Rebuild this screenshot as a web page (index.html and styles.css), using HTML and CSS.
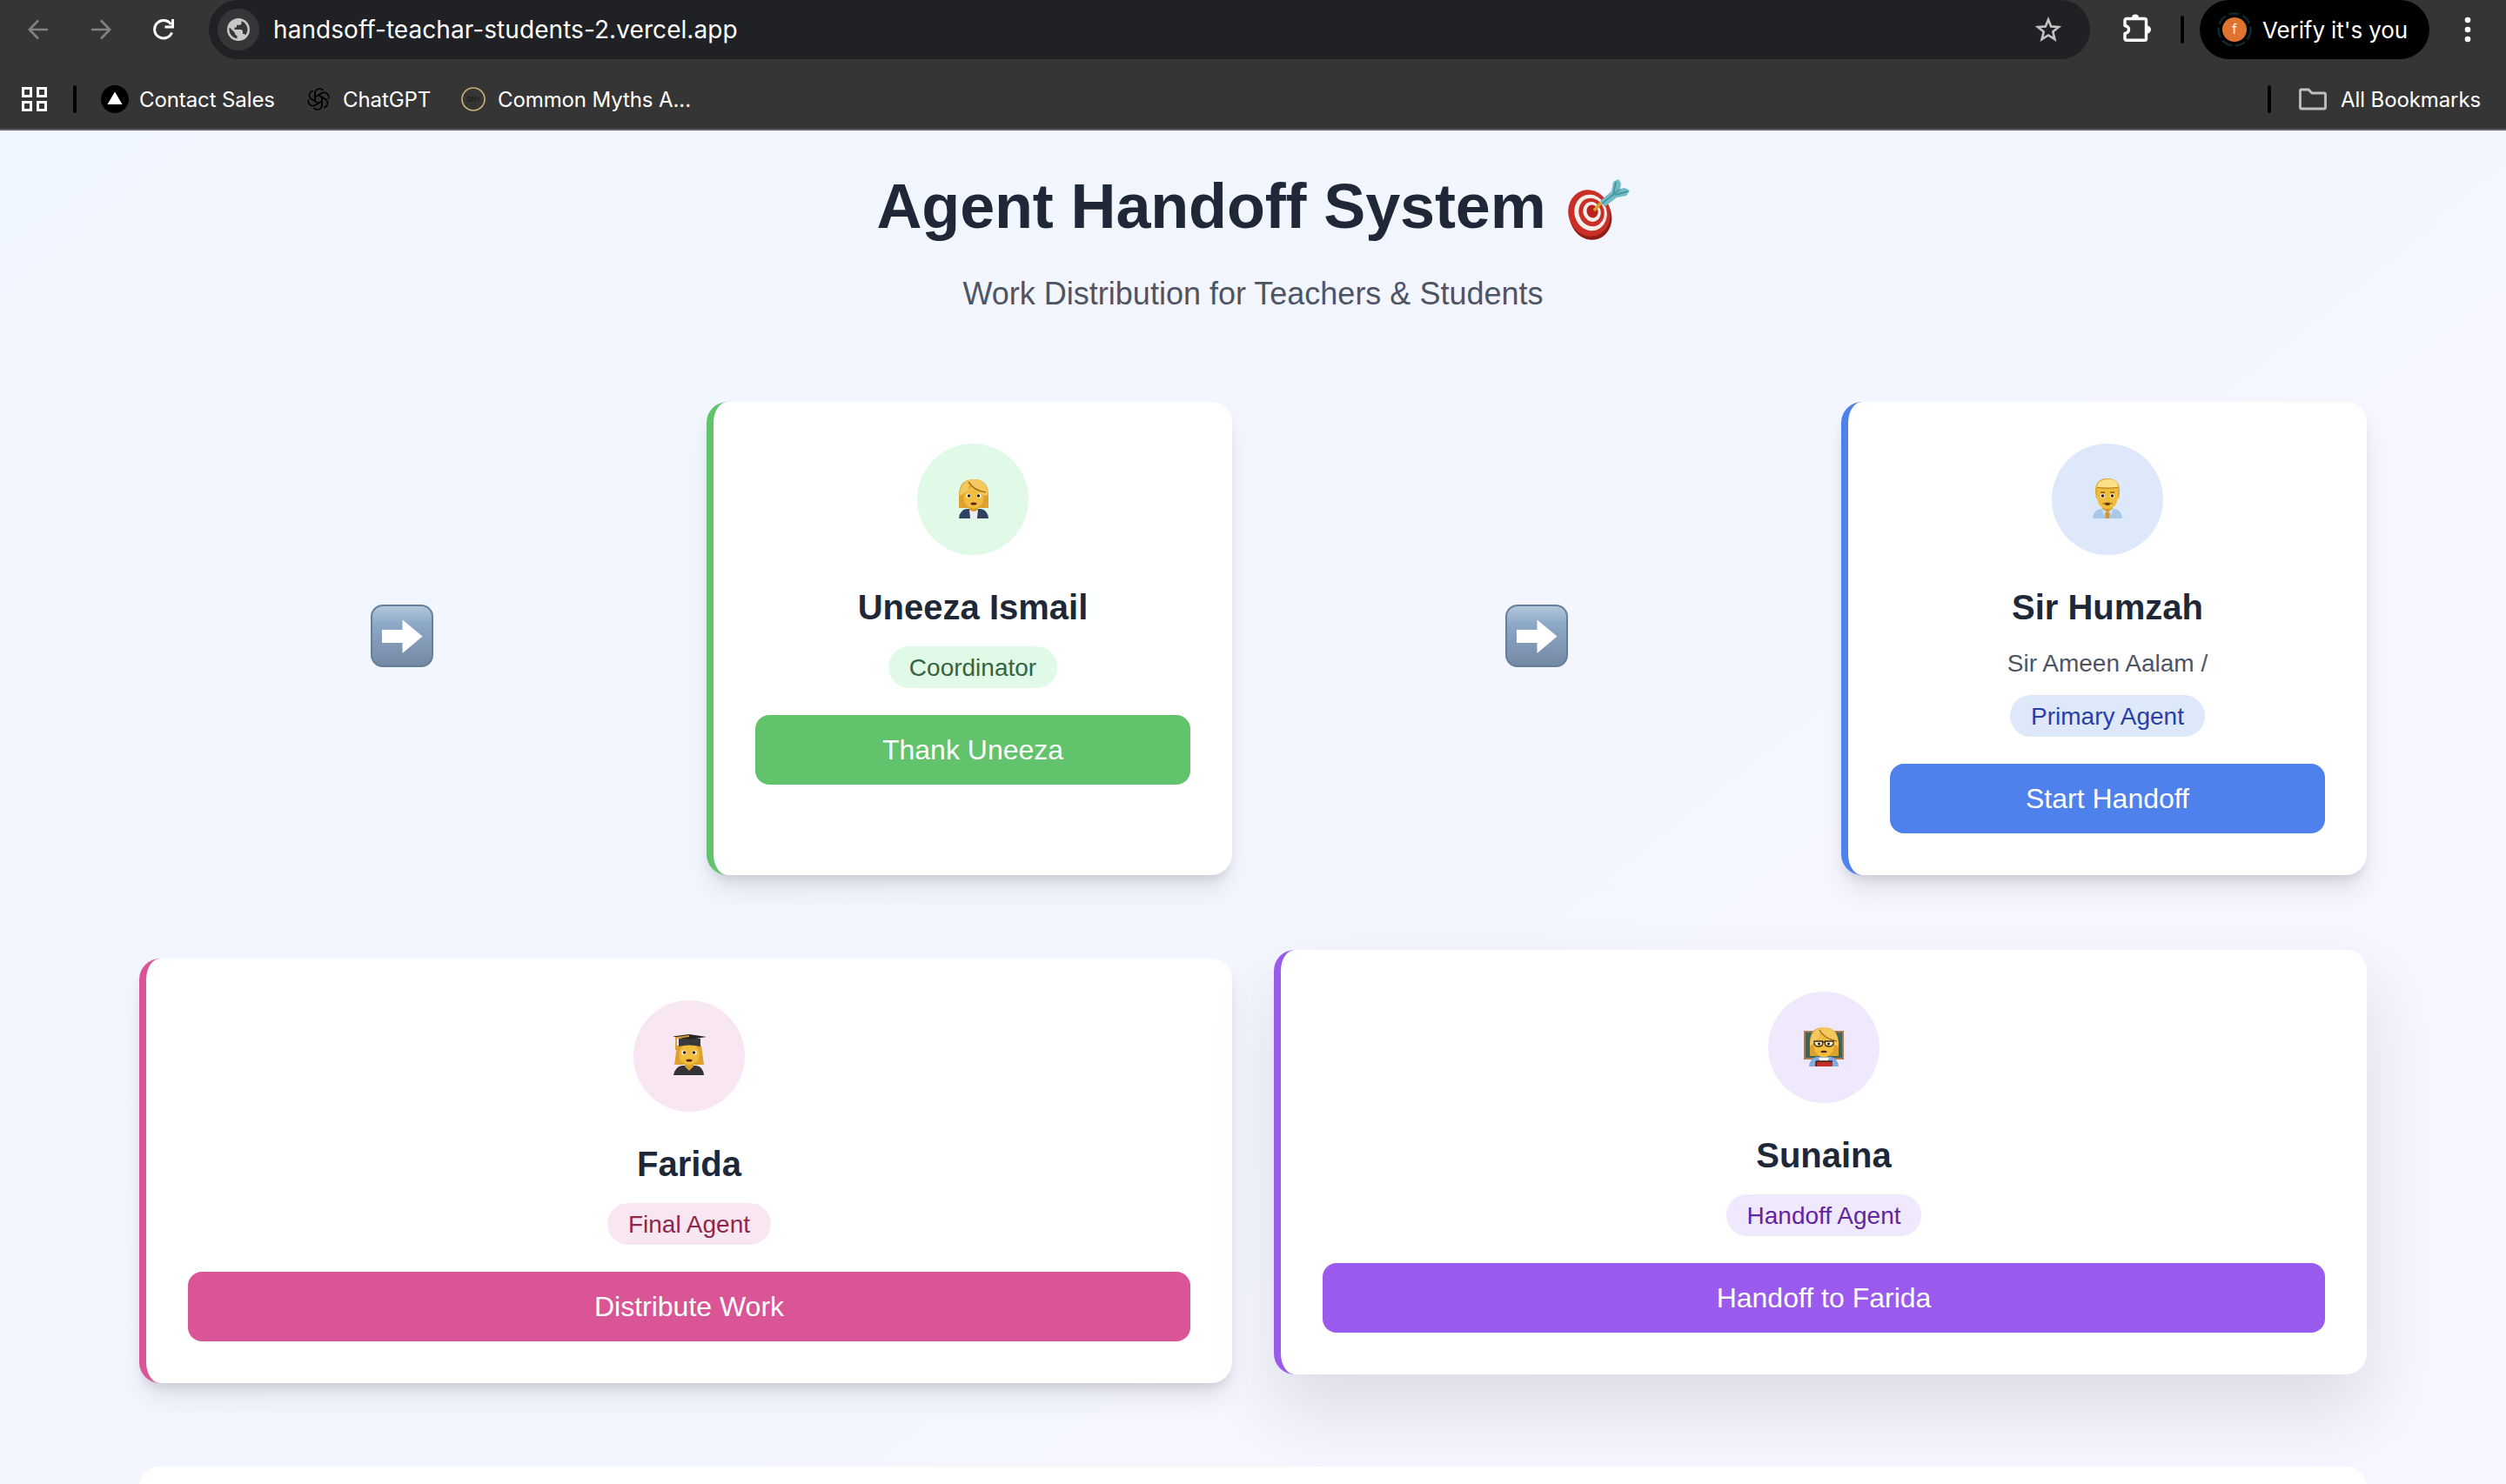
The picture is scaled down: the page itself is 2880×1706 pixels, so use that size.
FILE: index.html
```html
<!DOCTYPE html>
<html lang="en">
<head>
<meta charset="utf-8">
<title>Agent Handoff System</title>
<link rel="stylesheet" href="styles.css">
</head>
<body>
<header class="browser">
  <div class="toolbar">
    <svg class="nav back" viewBox="0 0 24 24"><path d="M23 12H2M12 1.500L1.700 12 12 22.500"/></svg>
    <svg class="nav forward" viewBox="0 0 24 24"><path d="M1 12H22M12 1.500L22.300 12 12 22.500"/></svg>
    <svg class="nav reload" viewBox="0 0 24 24"><path d="M21.500 15.500A10.300 10.300 0 1 1 20.500 6M22.500 0V9H13.500"/></svg>
    <div class="omnibox">
      <span class="site"><svg viewBox="0 0 26 26"><circle cx="13" cy="13" r="13" fill="#c7c7c7"/><path d="M2.700 10.500L9 16.800V18.300L11.500 20.500V23.300A10.400 10.400 0 0 1 2.700 10.500ZM16.500 3.200V5.200Q16.500 7.800 13.500 7.800H11V10.500H8.500V13H16Q18 13 18 15.500V18H19.500L21.300 19.300A10.400 10.400 0 0 0 16.500 3.200Z" fill="#353638"/></svg></span>
      <span class="url">handsoff-teachar-students-2.vercel.app</span>
      <svg class="star" viewBox="0 0 30 30"><path d="M15 3.500L18.200 11.400 27 12 20.300 17.600 22.400 26.200 15 21.500 7.600 26.200 9.700 17.600 3 12 11.800 11.400Z"/></svg>
    </div>
    <svg class="puzzle" viewBox="0 0 32 32"><path d="M4 5.500H24.500Q26.500 5.500 26.500 7.500V28.500Q26.500 30.300 24.500 30.300H4Q2 30.300 2 28.500V22.500Q6.500 21.500 6.500 18T2 13.500V7.500Q2 5.500 4 5.500Z"/><path class="knob" d="M10 4.500A4 4 0 0 1 18 4.500ZM27.500 13.500A4.500 4.500 0 0 1 27.500 22.500Z"/></svg>
    <i class="rule rule-a"></i>
    <div class="verify">
      <svg viewBox="0 0 42 42"><circle cx="21" cy="21" r="18.500" fill="none" stroke="#10282d" stroke-width="2.500" stroke-dasharray="12 4"/><circle cx="21" cy="21" r="14" fill="#df7430"/><text x="21" y="25.500" text-anchor="middle">f</text></svg>
      <span class="verify-text">Verify it's you</span>
    </div>
    <svg class="dots" viewBox="0 0 8 30"><circle cx="4" cy="4" r="3.300"/><circle cx="4" cy="15" r="3.300"/><circle cx="4" cy="26" r="3.300"/></svg>
  </div>
  <div class="bookmarks">
    <svg class="apps" viewBox="0 0 29 28"><path d="M1.500 1.500h9v9h-9zM18.500 1.500h9v9h-9zM1.500 17.500h9v9h-9zM18.500 17.500h9v9h-9z"/></svg>
    <i class="rule"></i>
    <div class="mark m1"><svg viewBox="0 0 32 32"><circle cx="16" cy="16" r="16"/><path d="M16 7.500L24.500 22H7.500Z" fill="#fff"/></svg><span>Contact Sales</span></div>
    <div class="mark m2"><svg viewBox="0 0 28 28"><g fill="none" stroke="#000" stroke-width="1.500"><path id="petal" d="M10 16.300V6.500A5.200 5.200 0 0 1 19.300 4M10 11.700L17.800 7.200A5.200 5.200 0 0 1 19.200 6.600"/><use href="#petal" transform="rotate(60 14 14)"/><use href="#petal" transform="rotate(120 14 14)"/><use href="#petal" transform="rotate(180 14 14)"/><use href="#petal" transform="rotate(240 14 14)"/><use href="#petal" transform="rotate(300 14 14)"/></g></svg><span>ChatGPT</span></div>
    <div class="mark m3"><svg viewBox="0 0 28 28"><circle cx="14" cy="14" r="13" fill="none" stroke="#c5ae78" stroke-width="1.700"/><text x="14" y="16.500" text-anchor="middle">SINY</text></svg><span>Common Myths A...</span></div>
    <div class="all"><i class="rule"></i><svg viewBox="0 0 32 26"><path d="M1.500 3.500Q1.500 2 3 2H11L15 6H29Q30.500 6 30.500 7.500V22.500Q30.500 24 29 24H3Q1.500 24 1.500 22.500Z"/></svg><span>All Bookmarks</span></div>
  </div>
</header>

<main class="page">
  <div class="heading">
    <h1><span>Agent Handoff System</span>
      <svg class="target" viewBox="0 0 72 72"><ellipse cx="27" cy="44" rx="24" ry="27" transform="rotate(-18 27 44)" fill="#8f1d16"/><ellipse cx="25.500" cy="40" rx="24" ry="27" transform="rotate(-18 25.500 40)" fill="#c92f26"/><ellipse cx="27" cy="39.500" rx="18.500" ry="21" transform="rotate(-18 27 39.500)" fill="#f5efec"/><ellipse cx="28" cy="39" rx="14.500" ry="16.500" transform="rotate(-18 28 39)" fill="#c92f26"/><ellipse cx="28.500" cy="38.500" rx="10" ry="11.500" transform="rotate(-18 28.500 38.500)" fill="#f5efec"/><ellipse cx="29" cy="38" rx="6.500" ry="7.500" transform="rotate(-18 29 38)" fill="#b8241c"/><path d="M31 37L39 28" stroke="#d5a42c" stroke-width="3.500"/><path d="M38 26L43 33 57 22 68 20 72 14 66 11 61 12 62 6 59 1 53 4 51 15Z" fill="#70bcc3"/><path d="M40 29L60 13M53 20L56 4M55 19L70 15" stroke="#418e9c" stroke-width="1.500"/></svg>
    </h1>
    <p>Work Distribution for Teachers &amp; Students</p>
  </div>

  <section class="grid">
    <div class="arrow"><svg viewBox="0 0 72 72"><defs><linearGradient id="key" x2="0" y2="1"><stop offset="0" stop-color="#b6c9dc"/><stop offset=".3" stop-color="#8da8c8"/><stop offset=".6" stop-color="#849bb8"/><stop offset="1" stop-color="#7388a3"/></linearGradient></defs><rect x="1" y="1" width="70" height="70" rx="13" fill="url(#key)" stroke="#667f9b" stroke-width="2"/><path d="M13 29H36.500V17.500L59.500 36.500 36.500 56V44H13Z" fill="#fff"/></svg></div>
    <article class="card green">
      <div class="avatar"><svg viewBox="0 0 48 48"><path d="M7 35V19Q8 2 24 2T41 19V35Z" fill="#dda22e"/><path d="M7 47Q8 37 16 36H32Q40 37 41 47Z" fill="#30405f"/><path d="M19 36H29L28 47H20Z" fill="#eceef4"/><path d="M19 32H29V37Q24 41 19 37Z" fill="#d99b26"/><ellipse cx="24" cy="23" rx="11.500" ry="12.500" fill="#f2bd3c"/><path d="M8 21Q8 3 24 2T40 21Q30 20 19 9 17 17 8 21Z" fill="#f3c85f"/><path d="M18 5Q24 15 38 17" fill="none" stroke="#a86d18" stroke-width="1.500"/><circle cx="18" cy="21" r="2.600" fill="#fff"/><circle cx="30" cy="21" r="2.600" fill="#fff"/><circle cx="18.500" cy="21" r="1.800" fill="#34200d"/><circle cx="29.500" cy="21" r="1.800" fill="#34200d"/><ellipse cx="24" cy="30" rx="3.500" ry="1.500" fill="#5c2611"/></svg></div>
      <h2>Uneeza Ismail</h2>
      <span class="badge">Coordinator</span>
      <button>Thank Uneeza</button>
    </article>
    <div class="arrow"><svg viewBox="0 0 72 72"><rect x="1" y="1" width="70" height="70" rx="13" fill="url(#key)" stroke="#667f9b" stroke-width="2"/><path d="M13 29H36.500V17.500L59.500 36.500 36.500 56V44H13Z" fill="#fff"/></svg></div>
    <article class="card blue">
      <div class="avatar"><svg viewBox="0 0 48 48"><path d="M7 47Q8 37 16 36H32Q40 37 41 47Z" fill="#a9c8e8"/><path d="M18 33H30V37L24 41 18 37Z" fill="#d69a2b"/><path d="M17 35L24 40 20 44ZM31 35L24 40 28 44Z" fill="#cde0f4"/><path d="M24 39L27 41 26 47H22L21 41Z" fill="#cf9a3c"/><path d="M10 18Q9 1 24 1T38 18L37 24H11Z" fill="#dfa934"/><path d="M12 12H36V22Q35 36 24 36T12 22Z" fill="#f0bd3d"/><path d="M12 11Q12 3 24 2T36 11Q24 12 12 11Z" fill="#ffe08a"/><path d="M12 11.500Q24 13 36 11.500" fill="none" stroke="#b07c1d" stroke-width="1.200"/><path d="M16 17h5M27 17h5" stroke="#855116" stroke-width="1.500"/><circle cx="18.500" cy="21" r="2.500" fill="#fff"/><circle cx="29.500" cy="21" r="2.500" fill="#fff"/><circle cx="18.500" cy="21" r="1.800" fill="#34200d"/><circle cx="29.500" cy="21" r="1.800" fill="#34200d"/><path d="M18 30Q24 28 30 30" fill="none" stroke="#9b6a20" stroke-width="1"/><ellipse cx="24" cy="30.500" rx="3" ry="1.200" fill="#4e210d"/></svg></div>
      <h2>Sir Humzah</h2>
      <p class="sub">Sir Ameen Aalam /</p>
      <span class="badge">Primary Agent</span>
      <button>Start Handoff</button>
    </article>
    <article class="card pink wide">
      <div class="avatar"><svg viewBox="0 0 48 48"><path d="M7 35L10 13H38L41 35Z" fill="#dda22e"/><path d="M6 47Q8 37 16 36H32Q40 37 41 47Z" fill="#333336"/><path d="M19 32H29V37L24 42 19 37Z" fill="#dda22e"/><ellipse cx="24" cy="23" rx="11.500" ry="12" fill="#f2bd3c"/><path d="M12 14V5L24 3 37 5V14Q24 11 12 14Z" fill="#39393c"/><path d="M5 2.500L24 0 44 3 24 6Z" fill="#242426"/><path d="M24 2L9 4V18" fill="none" stroke="#d69a31" stroke-width="1.800"/><circle cx="18" cy="21" r="2.600" fill="#fff"/><circle cx="30" cy="21" r="2.600" fill="#fff"/><circle cx="18.500" cy="21" r="1.800" fill="#34200d"/><circle cx="29.500" cy="21" r="1.800" fill="#34200d"/><ellipse cx="24" cy="30" rx="3.500" ry="1.500" fill="#5c2611"/></svg></div>
      <h2>Farida</h2>
      <span class="badge">Final Agent</span>
      <button>Distribute Work</button>
    </article>
    <article class="card purple wide raised">
      <div class="avatar"><svg viewBox="0 0 48 48"><path d="M2 7H46V38H2Z" fill="#3c665a" stroke="#b1794e" stroke-width="2"/><path d="M8 35V19Q8 2 24 2T41 19V35Z" fill="#dda22e"/><path d="M7 47Q8 37 16 36H32Q40 37 41 47Z" fill="#83ace0"/><ellipse cx="24" cy="23" rx="11.500" ry="13.500" fill="#f2bd3c"/><path d="M8 24Q8 3 24 2T41 24Q30 20 20 9 17 18 8 24Z" fill="#f3c85f"/><path d="M19 5Q24 15 39 18" fill="none" stroke="#a86d18" stroke-width="1.500"/><path d="M13 18H22.500V21.500Q22 24 18 24T13 21ZM25.500 18H35V21Q34 24 30 24T25.500 21.500ZM22.500 19H25.500" fill="#fff3cb" stroke="#3b2b1b" stroke-width="1.300"/><circle cx="18.500" cy="21" r="1.600" fill="#34200d"/><circle cx="29.500" cy="21" r="1.600" fill="#34200d"/><ellipse cx="24" cy="30" rx="3.500" ry="1.300" fill="#5c2611"/><path d="M18 37H30L28 41H20Z" fill="#fff"/><path d="M15 41H34V47H15Z" fill="#c52f2a"/><path d="M15 41V47M15 41H34" stroke="#382426" stroke-width="1.500"/></svg></div>
      <h2>Sunaina</h2>
      <span class="badge">Handoff Agent</span>
      <button>Handoff to Farida</button>
    </article>
  </section>
  <section class="panel"></section>
</main>
</body>
</html>
```
FILE: styles.css
```css
* { box-sizing: border-box; }
body { margin: 0; height: 1706px; overflow: hidden; font-family: "Liberation Sans", Arial, sans-serif; }
h1, h2, p { margin: 0; }
svg { display: block; flex: none; }

.browser { height: 150px; background: #353535; border-bottom: 2px solid #616161; color: #fff; font-family: Inter, sans-serif; }
.toolbar { display: flex; align-items: center; height: 68px; padding-left: 32px; }
.nav { width: 24px; height: 24px; fill: none; stroke: #828282; stroke-width: 2.6; }
.forward { margin-left: 48px; }
.reload { margin-left: 48px; stroke: #fff; stroke-width: 3; }
.omnibox { display: flex; align-items: center; width: 2162px; height: 68px; margin-left: 40px; padding: 0 33px 0 10px; border-radius: 34px; background: #202125; }
.site { display: flex; align-items: center; justify-content: center; width: 48px; height: 48px; border-radius: 50%; background: #353638; }
.site svg { width: 26px; height: 26px; }
.url { margin-left: 16px; font-size: 28px; letter-spacing: .07px; white-space: nowrap; }
.star { width: 30px; height: 30px; margin-left: auto; fill: none; stroke: #c3c3c4; stroke-width: 2.6; }
.puzzle { width: 32px; height: 32px; margin: -4px 0 0 38px; fill: none; stroke: #fff; stroke-width: 3.4; stroke-linejoin: round; }
.puzzle .knob { fill: #fff; stroke: none; }
.rule { flex: none; width: 4px; height: 32px; border-radius: 2px; background: #000; }
.rule-a { margin-left: 34px; }
.verify { display: flex; align-items: center; width: 264px; height: 68px; margin-left: 18px; padding-left: 19px; border-radius: 34px; background: #000; }
.verify svg { width: 42px; height: 42px; }
.verify text { font: 15px Inter, sans-serif; fill: #fff; }
.verify-text { margin-left: 11px; font-size: 26px; font-weight: 400; letter-spacing: -.1px; white-space: nowrap; }
.dots { width: 8px; height: 30px; margin-left: 40px; fill: #fff; }
.bookmarks { display: flex; align-items: center; height: 92px; padding: 0 30px 0 25px; font-size: 24px; letter-spacing: -.1px; white-space: nowrap; }
.apps { width: 29px; height: 28px; margin-right: 30px; fill: none; stroke: #fff; stroke-width: 3; }
.mark, .all { display: flex; align-items: center; }
.m1 { width: 209px; margin-left: 28px; gap: 12px; }
.m1 svg { width: 32px; height: 32px; }
.m2 { width: 178px; margin-left: 27px; gap: 14px; }
.m2 svg, .m3 svg { width: 28px; height: 28px; }
.m3 { gap: 14px; }
.m3 text { font: 7px Inter, sans-serif; fill: #171717; }
.all { margin-left: auto; }
.all span { width: 160px; }
.all svg { width: 32px; height: 26px; margin: 0 16px 0 32px; fill: none; stroke: #c0c0c0; stroke-width: 2.8; }

.page { height: 1556px; padding: 48px 160px 0; overflow: hidden; background: linear-gradient(to bottom right, #f0f6ff, #f8f5ff) 0 0 / 100% 2300px; }
.heading { text-align: center; }
h1 { display: flex; justify-content: center; gap: 24px; height: 80px; line-height: 78px; font-size: 72px; font-weight: 700; letter-spacing: -.15px; color: #202837; }
.target { width: 72px; height: 72px; margin-top: 10px; transform: translateY(-3px); }
.heading p { margin-top: 32px; line-height: 56px; font-size: 36px; color: #4d5564; }
.grid { display: grid; grid-template-columns: repeat(4, 604px); column-gap: 48px; row-gap: 96px; margin-top: 96px; }
.arrow { display: flex; align-items: center; justify-content: center; padding-bottom: 6px; }
.arrow svg { width: 72px; height: 72px; }
.card { display: flex; flex-direction: column; align-items: center; padding: 48px; border-left: 8px solid var(--main); border-radius: 24px; background: #fff; box-shadow: 0 20px 30px -6px rgba(0,0,0,.1), 0 8px 12px -4px rgba(0,0,0,.1); }
.wide { grid-column: span 2; }
.raised { position: relative; top: -10px; box-shadow: 0 40px 80px rgba(0,0,0,.1); }
.green { --main: #61c36c; --soft: #e1f9e7; --ink: #336640; }
.blue { --main: #4f81ec; --soft: #dee8fb; --ink: #2740a8; }
.pink { --main: #d95596; --soft: #f8e7f2; --ink: #8f264c; }
.purple { --main: #9b5aee; --soft: #f0e8fd; --ink: #6226a0; }
.avatar { display: flex; align-items: center; justify-content: center; width: 128px; height: 128px; margin-bottom: 32px; border-radius: 50%; background: var(--soft); }
.avatar svg { width: 48px; height: 48px; }
.green .avatar svg { margin-left: 2px; }
.avatar svg { margin-top: -2px; }
h2 { height: 56px; margin-bottom: 16px; line-height: 56px; font-size: 40px; font-weight: 700; color: #202837; }
.sub { height: 40px; margin-bottom: 16px; line-height: 41px; font-size: 28px; color: #4d5564; }
.badge { height: 48px; margin: 1px 0 31px; padding: 0 24px; border-radius: 24px; line-height: 49px; font-size: 28px; background: var(--soft); color: var(--ink); }
button { width: 100%; height: 80px; padding: 0; border: 0; border-radius: 16px; font: 32px/80px "Liberation Sans", Arial, sans-serif; background: var(--main); color: #fff; }
.panel { height: 300px; margin-top: 96px; border-radius: 24px; background: #fff; }
```
